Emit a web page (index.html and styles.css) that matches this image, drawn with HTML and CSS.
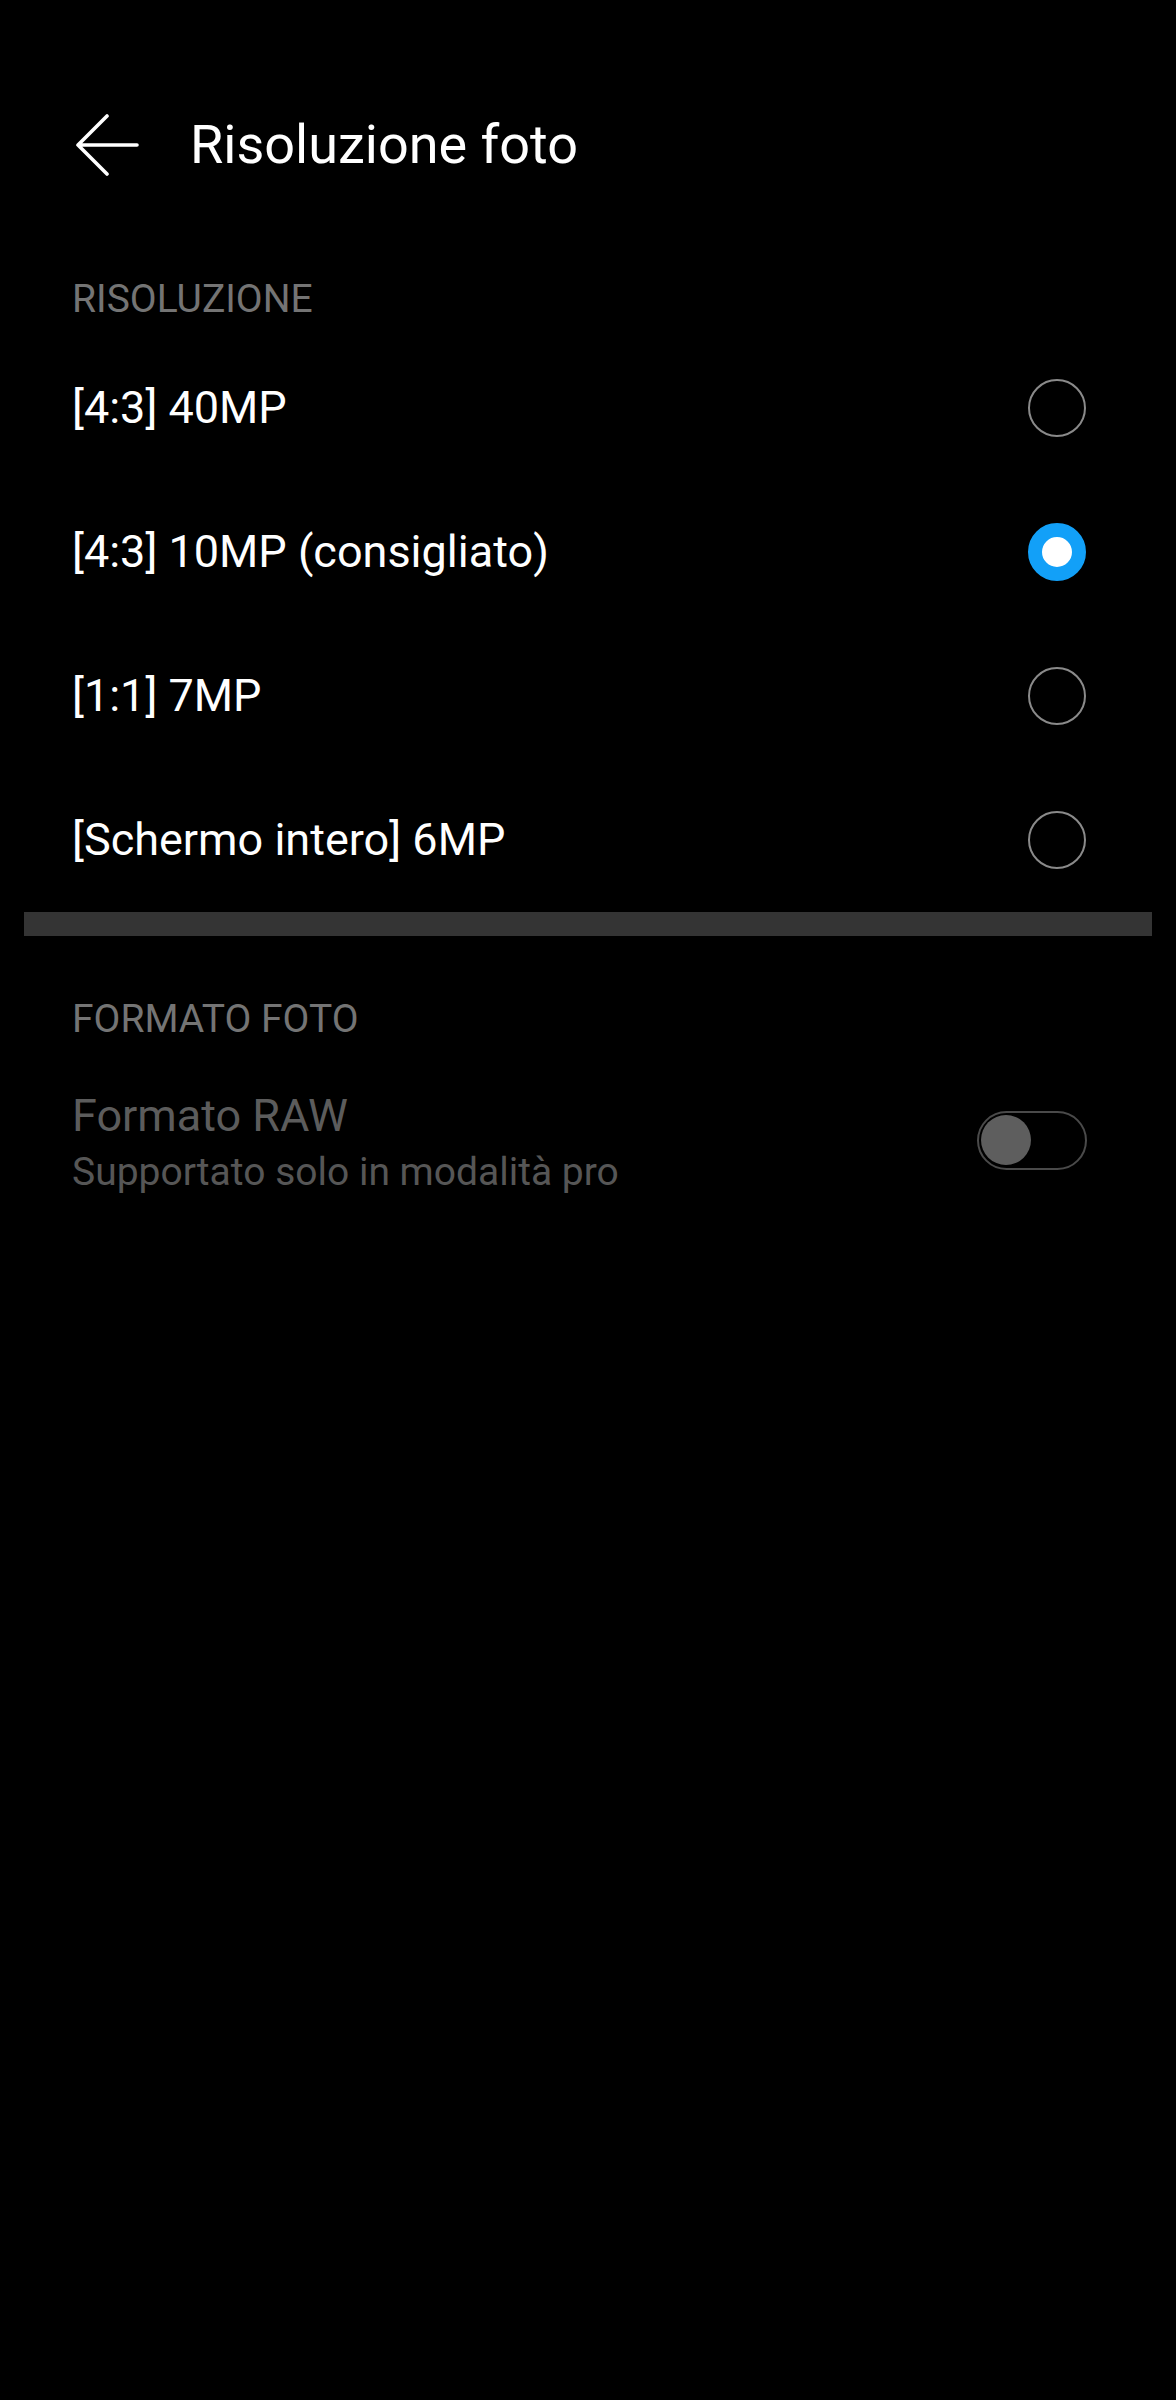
FILE: index.html
```html
<!DOCTYPE html>
<html lang="it">
<head>
    <meta charset="UTF-8">
    <meta name="viewport" content="width=device-width, initial-scale=1.0">
    <title>Risoluzione foto</title>
    <link rel="stylesheet" href="styles.css">
</head>
<body>
    <header class="appbar">
        <svg class="back-icon" viewBox="0 0 64 64" width="64" height="64">
            <path d="M2 32 H61 M31 3 L2 32 L31 61" fill="none" stroke="#ffffff" stroke-width="3.6" stroke-linecap="round" stroke-linejoin="round"/>
        </svg>
        <h1 class="appbar-title">Risoluzione foto</h1>
    </header>

    <div class="section-title first">RISOLUZIONE</div>
    <ul class="option-list">
        <li class="option">
            <span class="option-label">[4:3] 40MP</span>
            <span class="radio"></span>
        </li>
        <li class="option">
            <span class="option-label">[4:3] 10MP (consigliato)</span>
            <span class="radio checked"></span>
        </li>
        <li class="option">
            <span class="option-label">[1:1] 7MP</span>
            <span class="radio"></span>
        </li>
        <li class="option">
            <span class="option-label">[Schermo intero] 6MP</span>
            <span class="radio"></span>
        </li>
    </ul>

    <div class="divider"></div>

    <div class="section-title">FORMATO FOTO</div>
    <div class="switch-item disabled">
        <div class="switch-text">
            <div class="switch-title">Formato RAW</div>
            <div class="switch-summary">Supportato solo in modalità pro</div>
        </div>
        <span class="switch"><span class="switch-knob"></span></span>
    </div>
</body>
</html>
```

FILE: styles.css
```css
html {
    background-color: #000000;
}

body {
    margin: 0;
    min-height: 2400px;
    background-color: #000000;
    color: #ffffff;
    font-family: Roboto, "Noto Sans", "Liberation Sans", sans-serif;
}

.appbar {
    display: flex;
    align-items: center;
    height: 144px;
    padding: 73px 0 0 76px;
}

.back-icon {
    flex-shrink: 0;
}

.appbar-title {
    margin: 0 0 0 50px;
    font-size: 54px;
    font-weight: 400;
    line-height: 54px;
}

.section-title {
    padding: 64px 90px 18px 72px;
    font-size: 39px;
    line-height: 38px;
    color: #747474;
}

.section-title.first {
    padding-top: 63px;
}

.option-list {
    list-style: none;
    margin: 0;
    padding: 0;
}

.option {
    display: flex;
    align-items: center;
    justify-content: space-between;
    height: 144px;
    padding: 0 90px 0 72px;
}

.option-label {
    font-size: 45px;
    line-height: 44px;
}

.radio {
    box-sizing: border-box;
    width: 58px;
    height: 58px;
    border: 2px solid #8a8a8a;
    border-radius: 50%;
}

.radio.checked {
    border: 14px solid #12a0f8;
    background-color: #ffffff;
}

.divider {
    height: 24px;
    margin: 0 24px;
    background-color: #343434;
}

.switch-item {
    display: flex;
    align-items: center;
    justify-content: space-between;
    padding: 38px 89px 0 72px;
}

.switch-title {
    font-size: 45px;
    line-height: 44px;
    color: #5c5c5c;
}

.switch-summary {
    margin-top: 15px;
    font-size: 39px;
    line-height: 38px;
    color: #565656;
}

.switch {
    box-sizing: border-box;
    display: flex;
    align-items: center;
    width: 110px;
    height: 59px;
    padding: 0 2px;
    border: 2px solid #4a4a4a;
    border-radius: 30px;
    margin-top: -5px;
}

.switch-knob {
    width: 50px;
    height: 50px;
    border-radius: 50%;
    background-color: #5e5e5e;
}
```
